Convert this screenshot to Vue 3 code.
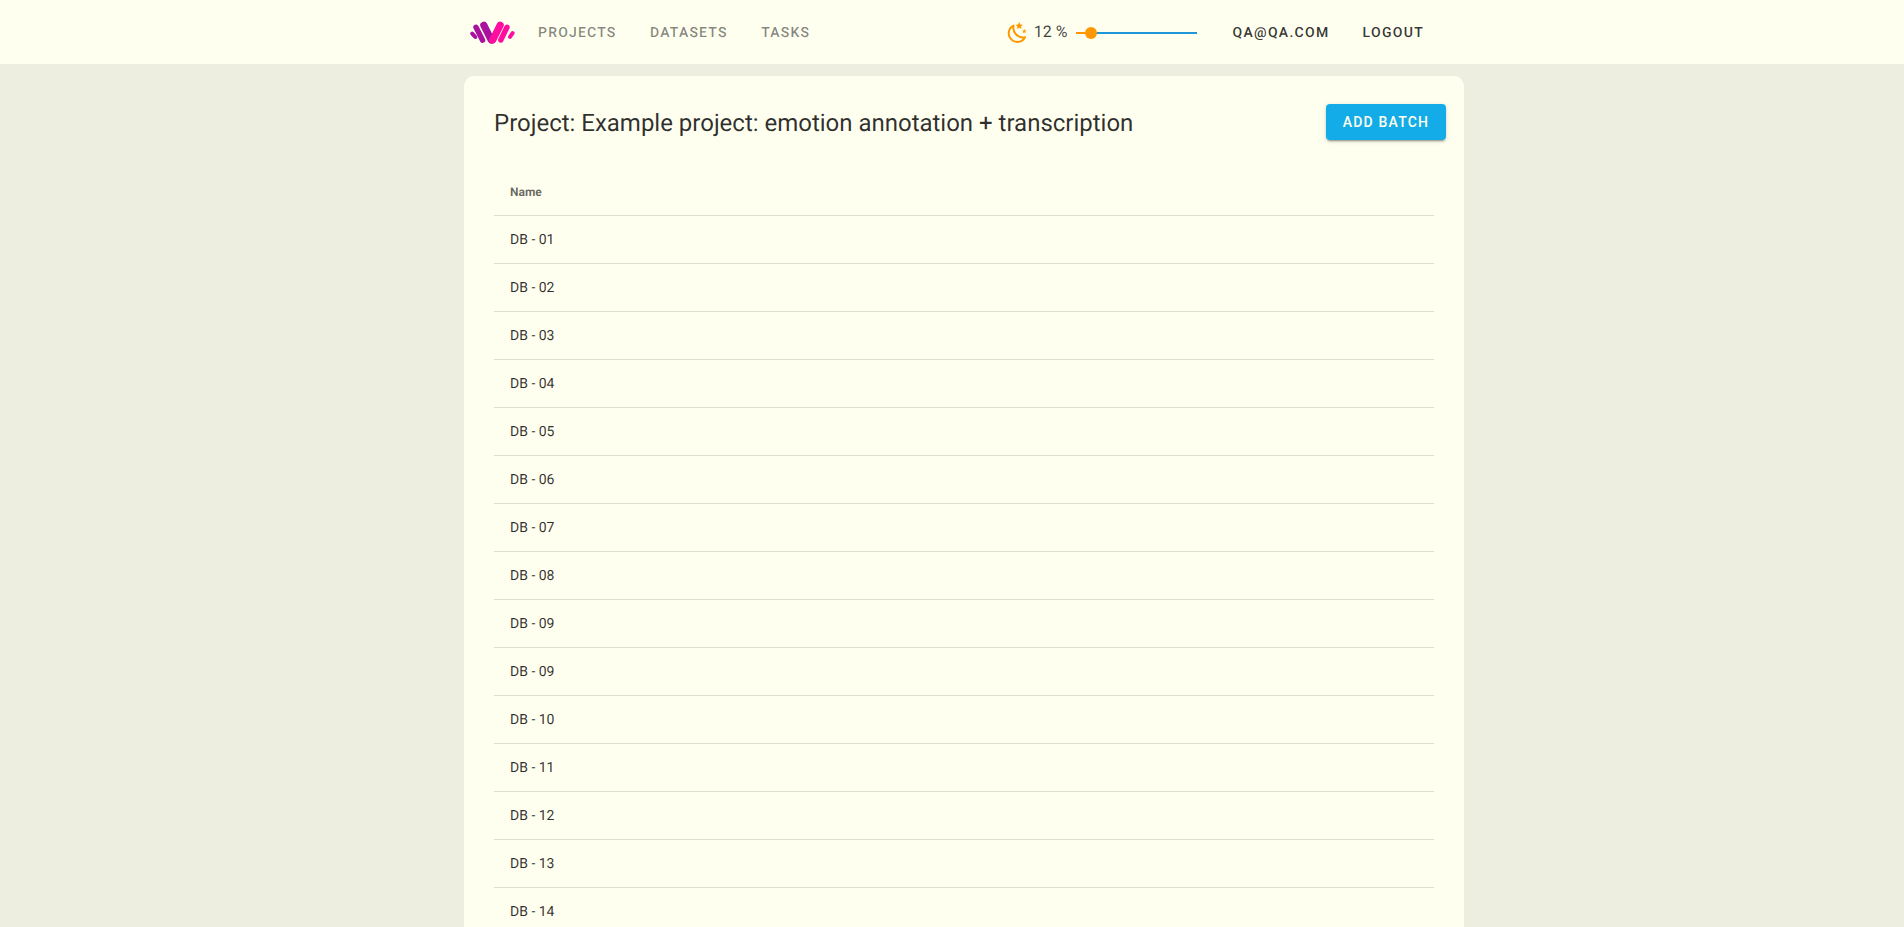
<script setup>
const nums = ['01','02','03','04','05','06','07','08','09','09','10','11','12','13','14']
const rows = nums.map((n, i) => ({ id: i, name: 'DB - ' + n }))
const navItems = ['PROJECTS', 'DATASETS', 'TASKS']
</script>

<template>
  <div class="page">
    <header class="topbar">
      <div class="topbar-inner">
        <svg class="logo" viewBox="0 0 60 40" width="60" height="40" fill="none" aria-label="logo">
          <path d="M7.2 21.6 L10.3 25" stroke="#a8129e" stroke-width="4" stroke-linecap="round" />
          <path d="M11 15.2 L17.6 28.2" stroke="#a8129e" stroke-width="5.4" stroke-linecap="round" />
          <path d="M18.8 13.2 L26.2 28" stroke="#a8129e" stroke-width="7.2" stroke-linecap="round" />
          <path d="M35.2 13.2 L27.8 28" stroke="#ff0f9f" stroke-width="7.2" stroke-linecap="round" />
          <path d="M42 15.2 L35.8 28" stroke="#ff0f9f" stroke-width="5.4" stroke-linecap="round" />
          <path d="M47.6 21.2 L45 24.8" stroke="#ff0f9f" stroke-width="4" stroke-linecap="round" />
        </svg>
        <nav class="nav">
          <span v-for="item in navItems" :key="item" class="nav-item">{{ item }}</span>
        </nav>
        <div class="brightness">
          <svg class="moon" viewBox="0 0 24 24" width="24" height="24" fill="none">
            <path d="M9.6 5.6 A8.6 8.6 0 1 0 21 17.2 A9.6 9.6 0 0 1 9.6 5.6 Z" stroke="#ff9800" stroke-width="2" stroke-linejoin="round" />
            <path d="M15.2 2 l1.1 2.4 2.6.3-1.9 1.8.5 2.6-2.3-1.3-2.3 1.3.5-2.6-1.9-1.8 2.6-.3z" fill="#ff9800" />
            <path d="M20.3 9 l.7 1.4 1.5.2-1.1 1 .3 1.5-1.4-.7-1.4.7.3-1.5-1.1-1 1.5-.2z" fill="#ff9800" />
          </svg>
          <span class="percent">12 %</span>
          <div class="slider">
            <div class="slider-fill"></div>
            <div class="slider-track"></div>
            <div class="slider-thumb"></div>
          </div>
        </div>
        <div class="account">
          <span class="account-item">QA@QA.COM</span>
          <span class="account-item">LOGOUT</span>
        </div>
      </div>
    </header>

    <div class="content">
      <main class="card">
        <div class="card-head">
          <h1 class="title">Project: Example project: emotion annotation + transcription</h1>
          <button class="add-btn" type="button">ADD BATCH</button>
        </div>
        <table class="table">
          <thead>
            <tr><th>Name</th></tr>
          </thead>
          <tbody>
            <tr v-for="r in rows" :key="r.id"><td>{{ r.name }}</td></tr>
          </tbody>
        </table>
      </main>
    </div>
  </div>
</template>

<style>
html, body {
  margin: 0;
  background: #eeeee0;
  overflow: hidden;
  height: 100%;
}
</style>

<style scoped>
.page {
  font-family: Roboto, "Liberation Sans", sans-serif;
  color: rgba(0, 0, 0, 0.87);
  background: #eeeee0;
  min-height: 927px;
  text-rendering: geometricPrecision;
}
.topbar {
  height: 64px;
  background: #fffff0;
  padding-left: 24px;
}
.topbar-inner {
  width: 1000px;
  height: 64px;
  margin: 0 auto;
  display: flex;
  align-items: center;
  box-sizing: border-box;
  padding-left: 1px;
}
.logo {
  flex: none;
}
.nav {
  display: flex;
  gap: 33.5px;
  margin-left: 13px;
  margin-top: 1px;
}
.nav-item {
  font-size: 14px;
  font-weight: 500;
  letter-spacing: 1.2px;
  line-height: 20px;
  color: rgba(0, 0, 0, 0.48);
}
.brightness {
  display: flex;
  align-items: center;
  margin-left: auto;
}
.moon {
  flex: none;
}
.percent {
  font-size: 16px;
  margin-left: 6px;
  line-height: 24px;
  color: rgba(0, 0, 0, 0.75);
}
.slider {
  position: relative;
  width: 121px;
  height: 14px;
  margin-top: 1px;
  margin-left: 8px;
  margin-right: 36px;
}
.slider-fill {
  position: absolute;
  left: 0;
  top: 6px;
  width: 15px;
  height: 2px;
  background: #ff9800;
}
.slider-track {
  position: absolute;
  left: 15px;
  right: 0;
  top: 6px;
  height: 2px;
  background: #2196d9;
}
.slider-thumb {
  position: absolute;
  left: 9px;
  top: 1px;
  width: 12px;
  height: 12px;
  border-radius: 50%;
  background: #ff9800;
}
.account {
  display: flex;
  gap: 33px;
  margin-right: 40px;
  margin-top: 1px;
}
.account-item {
  font-size: 14px;
  font-weight: 500;
  letter-spacing: 1.3px;
  line-height: 20px;
  color: rgba(0, 0, 0, 0.8);
}
.content {
  padding-left: 24px;
}
.card {
  width: 1000px;
  margin: 12px auto 0;
  background: #fffff0;
  border-radius: 10px;
  box-sizing: border-box;
  padding: 28px 18px 40px 30px;
}
.card-head {
  display: flex;
  align-items: center;
  justify-content: space-between;
  height: 36px;
}
.title {
  margin: 1px 0 0;
  font-size: 24px;
  font-weight: 400;
  line-height: 36px;
  letter-spacing: -0.01px;
  color: rgba(0, 0, 0, 0.82);
}
.add-btn {
  flex: none;
  width: 120px;
  height: 36px;
  border: 0;
  border-radius: 4px;
  background: #14ace8;
  color: #fffff0;
  font-family: inherit;
  font-size: 14px;
  font-weight: 500;
  letter-spacing: 1.2px;
  box-shadow: 0 3px 1px -2px rgba(0,0,0,.2), 0 2px 2px 0 rgba(0,0,0,.14), 0 1px 5px 0 rgba(0,0,0,.12);
  padding: 0;
}
.table {
  width: 940px;
  margin-top: 27px;
  border-collapse: collapse;
}
.table th {
  height: 48px;
  box-sizing: border-box;
  text-align: left;
  padding: 2px 16px 0;
  font-size: 12px;
  font-weight: 700;
  color: rgba(0, 0, 0, 0.6);
  border-bottom: 1px solid #e0e0d2;
}
.table td {
  height: 48px;
  box-sizing: border-box;
  padding: 2px 16px 0;
  font-size: 14px;
  color: rgba(0, 0, 0, 0.82);
  border-bottom: 1px solid #e0e0d2;
}
</style>
